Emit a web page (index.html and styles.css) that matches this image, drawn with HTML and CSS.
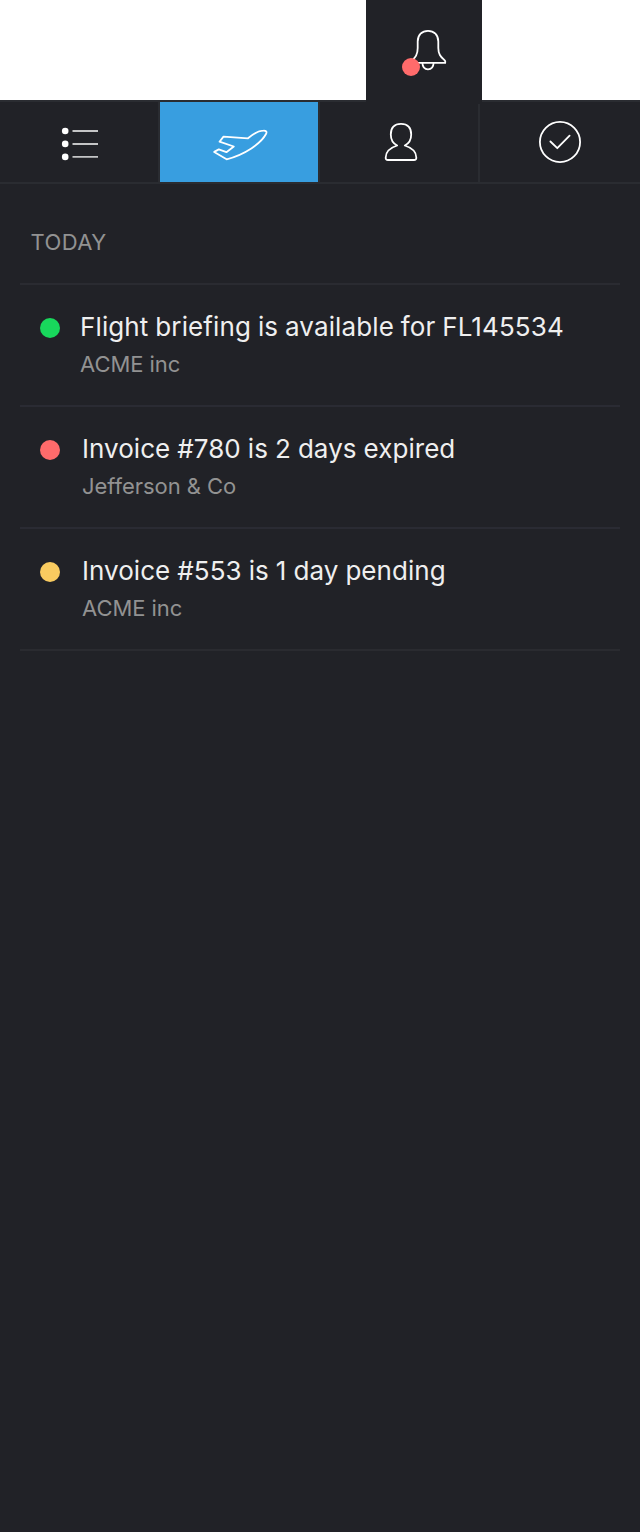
FILE: index.html
```html
<!DOCTYPE html>
<html lang="en">
<head>
<meta charset="utf-8">
<title>Notifications</title>
<link rel="stylesheet" href="styles.css">
</head>
<body>
<header class="topbar">
  <button class="bell" aria-label="Notifications">
    <svg class="bell-icon" viewBox="0 0 70 64">
      <path d="M20 42.9C24.500 38 27.700 36 27.700 28V21.500C27.700 15 32 10.800 38 10.800S48.300 15 48.300 21.500V28C48.300 35.500 52 37.500 55.200 41V42.900Z"/>
      <path d="M32.400 43C32.600 47 35 49.300 38 49.300S43.400 47 43.600 43"/>
      <circle class="badge" cx="21" cy="47" r="9"/>
    </svg>
  </button>
</header>
<nav class="tabs">
  <button class="tab" aria-label="List">
    <svg class="icon" viewBox="50 112 60 60">
      <g class="solid"><circle cx="65.200" cy="131" r="3.300"/><circle cx="65.200" cy="143.900" r="3.300"/><circle cx="65.200" cy="156.900" r="3.300"/></g>
      <path class="rules" d="M72.500 131H98M72.500 144H98M72.500 156.900H98"/>
    </svg>
  </button>
  <button class="tab active" aria-label="Flights">
    <svg class="icon" viewBox="210 112 60 60">
      <path d="M223.500 136.600L248 138.300C253.500 133.600 258.500 130.700 263.500 130.700C266 130.600 267.300 131.600 266 134C261 143.500 245 154.500 226.600 159.300L214.200 151.900L218.800 149.400L226.400 152.200L233.800 146.500L219.500 141.700Z"/>
    </svg>
  </button>
  <button class="tab" aria-label="Contacts">
    <svg class="icon" viewBox="370 112 60 60">
      <path d="M397.200 145.500C393 143.500 390.800 139.500 390.800 134.500C390.800 127.500 394.500 123.800 401 123.800S411.200 127.500 411.200 134.500C411.200 139.500 409 143.500 404.800 145.500C411 147.500 416.300 151.500 416.300 157.500Q416.500 160 414 160H388Q385.500 160 385.700 157.500C385.700 151.500 391 147.500 397.200 145.500Z"/>
    </svg>
  </button>
  <button class="tab" aria-label="Done">
    <svg class="icon" viewBox="530 112 60 60">
      <circle cx="560" cy="142" r="20.100"/>
      <path d="M550.400 141.500L557.300 148.200L569.600 135.600"/>
    </svg>
  </button>
</nav>
<main class="feed">
  <h2 class="heading">TODAY</h2>
  <ul class="list">
    <li class="item"><span class="dot green"></span><div class="body flight"><p class="title">Flight briefing is available for FL145534</p><p class="sub">ACME inc</p></div></li>
    <li class="item"><span class="dot red"></span><div class="body"><p class="title">Invoice #780 is 2 days expired</p><p class="sub">Jefferson &amp; Co</p></div></li>
    <li class="item"><span class="dot yellow"></span><div class="body"><p class="title">Invoice #553 is 1 day pending</p><p class="sub">ACME inc</p></div></li>
  </ul>
</main>
</body>
</html>
```
FILE: styles.css
```css
* { box-sizing: border-box; margin: 0; padding: 0; }
body {
  width: 640px;
  min-height: 1532px;
  background: #212227;
  font-family: Inter, "Liberation Sans", sans-serif;
}
button { border: 0; background: none; }
svg { display: block; fill: none; stroke: #fff; stroke-width: 1.8; stroke-linejoin: round; stroke-linecap: round; }
.topbar { height: 100px; background: #fff; padding-left: 366px; }
.bell {
  display: flex;
  align-items: flex-start;
  position: relative;
  width: 116px;
  height: 104px;
  padding: 20px 0 0 24px;
  background: #212227;
}
.bell-icon { width: 70px; height: 64px; }
.badge { fill: #ff6b6b; stroke: none; }
.tabs {
  display: grid;
  grid-template-columns: repeat(4, 160px);
  height: 84px;
  border-top: 2px solid #2a2c31;
  border-bottom: 2px solid #2a2c31;
}
.tab { display: flex; justify-content: center; padding-top: 10px; border-right: 2px solid #2a2c31; }
.tab:last-child { border-right: 0; }
.tab:not(:last-child) { padding-left: 2px; }
.active { background: #389ee0; }
.icon { width: 60px; height: 60px; }
.solid { fill: #fff; stroke: none; }
.rules { stroke: #c4c5c6; stroke-linecap: butt; }
.feed { padding: 0 20px; }
.heading {
  height: 101px;
  padding: 43px 0 0 10.5px;
  border-bottom: 2px solid #2a2b31;
  font-size: 22px;
  line-height: 30px;
  font-weight: 400;
  letter-spacing: 0.4px;
  color: #929292;
}
.list { list-style: none; }
.item {
  display: flex;
  height: 122px;
  padding: 25px 0 0 20px;
  border-bottom: 2px solid #2a2b33;
}
.item:last-child { border-color: #2a2b30; }
.dot { width: 20px; height: 20px; margin: 8px 22px 0 0; border-radius: 50%; }
.green { background: #18d85c; }
.red { background: #ff6b6b; }
.yellow { background: #f9cb60; }
.title { font-size: 26px; line-height: 34px; font-weight: 400; letter-spacing: 0.04px; word-spacing: -0.3px; color: #efefef; white-space: nowrap; }
.flight { margin-left: -2px; }
.flight .title { letter-spacing: 0.12px; word-spacing: -0.6px; }
.sub { margin-top: 5px; font-size: 22px; line-height: 30px; letter-spacing: -0.05px; color: #929292; }
```
